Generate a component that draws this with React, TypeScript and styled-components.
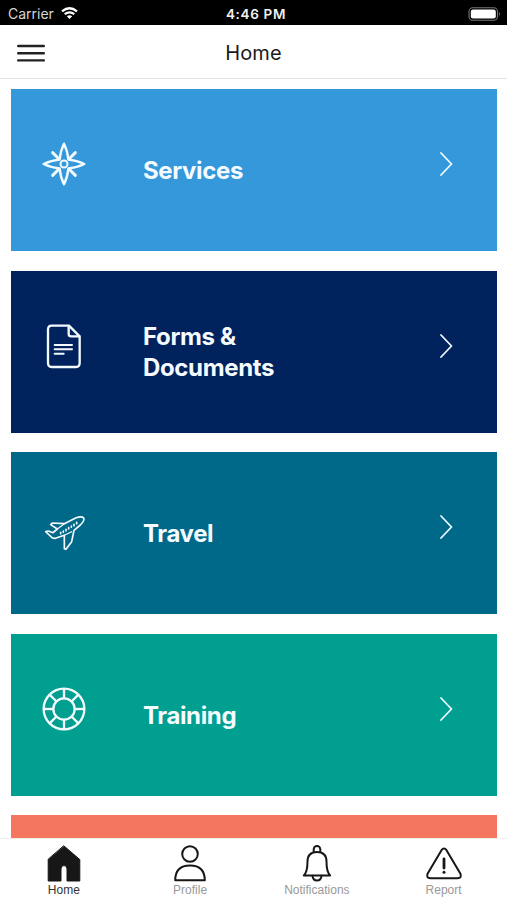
import React from 'react';
import styled, { createGlobalStyle } from 'styled-components';

const GlobalStyle = createGlobalStyle`
  * { box-sizing: border-box; }
  body { margin: 0; background: #fff; overflow: hidden; }
`;

const Screen = styled.div`
  width: 507px;
  height: 900px;
  display: flex;
  flex-direction: column;
  overflow: hidden;
  background: #fff;
  font-family: Inter, sans-serif;
`;

const StatusBar = styled.div`
  flex: none;
  height: 25px;
  display: grid;
  grid-template-columns: 1fr auto 1fr;
  align-items: center;
  padding: 2px 6px 0 8px;
  background: #000;
  color: #fff;
`;

const Carrier = styled.div`
  display: flex;
  align-items: center;
  gap: 7px;
  font-size: 14px;
  line-height: 16px;
  color: #d6d6d6;
`;

const Clock = styled.div`
  padding-left: 3px;
  font-size: 13.5px;
  line-height: 16px;
  font-weight: 600;
  letter-spacing: 0.65px;
  color: #f0f0f0;
`;

const Battery = styled.svg`
  justify-self: end;
  display: block;
`;

const Header = styled.header`
  flex: none;
  height: 54px;
  display: grid;
  grid-template-columns: 1fr auto 1fr;
  align-items: center;
  padding: 2px 17px 0;
  border-bottom: 1px solid #e4e4e4;
`;

const MenuButton = styled.button`
  width: 28px;
  height: 20px;
  padding: 0;
  border: 0;
  background: none;
  svg { display: block; }
`;

const Title = styled.h1`
  margin: 0;
  font-size: 20px;
  font-weight: 400;
  line-height: 24px;
  letter-spacing: 0.15px;
  color: #1a1a1a;
`;

const CardList = styled.main`
  flex: 1;
  min-height: 0;
  overflow: hidden;
  display: flex;
  flex-direction: column;
  gap: 19.6px;
  padding: 10px 10px 0 11px;
`;

const Card = styled.section<{ $color: string }>`
  flex: none;
  height: 162px;
  display: grid;
  grid-template-columns: 101px 1fr 76px;
  align-items: center;
  padding-left: 31px;
  background: ${p => p.$color};
`;

const CardIcon = styled.svg<{ $lift?: number }>`
  display: block;
  width: 44px;
  height: 44px;
  overflow: visible;
  margin-bottom: ${p => p.$lift ?? 12}px;
  fill: none;
  stroke: #f3fbff;
  stroke-width: 7;
  stroke-linejoin: round;
  stroke-linecap: round;
`;

const CardLabel = styled.h2`
  margin: 0;
  padding-top: 2px;
  width: 160px;
  font-size: 24px;
  line-height: 30.5px;
  font-weight: 700;
  letter-spacing: -0.36px;
  color: #f5fbff;
`;

const Chevron = styled.svg`
  display: block;
  margin: 0 0 12px 16.5px;
  fill: none;
  stroke: #effaff;
  stroke-width: 1.8;
  stroke-linecap: round;
  stroke-linejoin: round;
`;

const TabBar = styled.nav`
  flex: none;
  height: 62px;
  display: grid;
  grid-template-columns: repeat(4, 1fr);
  border-top: 1px solid #efefef;
  background: #fff;
`;

const Tab = styled.a<{ $active?: boolean }>`
  display: flex;
  flex-direction: column;
  align-items: center;
  padding-left: ${p => (p.$active ? 1 : 0)}px;
  font-family: "Liberation Sans", Arial, sans-serif;
  font-size: 12px;
  line-height: 14px;
  color: ${p => (p.$active ? '#333' : '#999')};
`;

const TabIcon = styled.svg`
  display: block;
  flex: none;
  width: 40px;
  height: 40px;
  margin-top: 4px;
  fill: none;
  stroke: #171717;
  stroke-width: 2;
  stroke-linejoin: round;
  stroke-linecap: round;
`;

const TabLabel = styled.span`
  display: block;
`;

const Compass = () => (
  <CardIcon viewBox="36 36 132 132">
    <path d="M102 41Q113 63 115 89Q141 91 163 102Q141 113 115 115Q113 141 102 163Q91 141 89 115Q63 113 41 102Q63 91 89 89Q91 63 102 41Z" />
    <circle cx="102" cy="102" r="10.5" strokeWidth="6" />
    <path d="M68 68L87 87M136 68L117 87M68 136L87 117M136 136L117 117" strokeWidth="9" />
  </CardIcon>
);

const Document = () => (
  <CardIcon viewBox="36 41 132 132" $lift={11}>
    <path d="M65 46H117L149 78V158Q149 170 138 170H65Q54 170 54 158V58Q54 46 65 46Z" />
    <path d="M116 47V70Q116 78 124 78H148" />
    <path d="M74 104H126M74 117H126M74 130H101" strokeWidth="6" />
  </CardIcon>
);

const Plane = () => (
  <CardIcon viewBox="36 33 132 132" $lift={0}>
    <g strokeWidth="5">
      <path d="M47 95L55 93L69 98L82 87L62 74L67 69L103 71L137 54Q155 47 161 54Q165 61 151 75L132 91L125 125L108 148L103 146L103 106L76 115Q67 116 64 111Z" />
      <path d="M82 87L103 71M103 106L125 95" strokeWidth="3.5" />
      <path d="M92 101V97M100 97V93M108 92V88M116 87V83M124 82V78M132 77V73M140 71V67" />
    </g>
  </CardIcon>
);

const Wheel = () => (
  <CardIcon viewBox="36 38 132 132">
    <circle cx="102" cy="104" r="61" />
    <circle cx="102" cy="104" r="32" />
    <g strokeLinecap="butt">
      {[0, 45, 90, 135, 180, 225, 270, 315].map(angle => (
        <path key={angle} d="M102 43V72" transform={`rotate(${angle} 102 104)`} />
      ))}
    </g>
  </CardIcon>
);

const cards = [
  { label: 'Services', color: '#3498db', Icon: Compass },
  { label: 'Forms & Documents', color: '#00235d', Icon: Document },
  { label: 'Travel', color: '#00698a', Icon: Plane },
  { label: 'Training', color: '#009f90', Icon: Wheel },
];

export default function App() {
  return (
    <>
      <GlobalStyle />
      <Screen>
        <StatusBar>
          <Carrier>
            Carrier
            <svg width="17" height="13" viewBox="0 0 17 13" fill="none" stroke="#fff" strokeWidth="2.2">
              <path d="M1 4.3Q8.5-1.8 16 4.3M3.7 7.2Q8.5 3.4 13.3 7.2" />
              <path d="M5.8 9.2Q8.5 7.2 11.2 9.2L8.5 12Z" fill="#fff" stroke="none" />
            </svg>
          </Carrier>
          <Clock>4:46 PM</Clock>
          <Battery width="33" height="14" viewBox="0 0 33 14">
            <rect x="1" y=".8" width="28.5" height="12.4" rx="3.8" fill="none" stroke="#777" strokeWidth="1.1" />
            <rect x="2.8" y="2.5" width="25" height="9" rx="2.2" fill="#fff" />
            <path d="M31 5Q33 7 31 9Z" fill="#777" />
          </Battery>
        </StatusBar>
        <Header>
          <MenuButton aria-label="Menu">
            <svg width="28" height="20" viewBox="0 0 28 20" stroke="#222" strokeWidth="2.4" strokeLinecap="round">
              <path d="M1.2 3H26.8M1.2 10.2H26.8M1.2 17.4H26.8" />
            </svg>
          </MenuButton>
          <Title>Home</Title>
        </Header>
        <CardList>
          {cards.map(({ label, color, Icon }) => (
            <Card key={label} $color={color}>
              <Icon />
              <CardLabel>{label}</CardLabel>
              <Chevron width="16" height="26" viewBox="0 0 16 26">
                <path d="M3 2L13.5 13L3 24" />
              </Chevron>
            </Card>
          ))}
          <Card $color="#f5765f" />
        </CardList>
        <TabBar>
          <Tab $active>
            <TabIcon viewBox="0 0 40 40">
              <path d="M20 3L35.8 16.5V38H23V26Q23 22.5 20 22.5Q17 22.5 17 26V38H4.2V16.5Z" fill="#171717" strokeWidth="1" />
            </TabIcon>
            <TabLabel>Home</TabLabel>
          </Tab>
          <Tab>
            <TabIcon viewBox="0 0 40 40">
              <circle cx="20" cy="11" r="7.8" />
              <path d="M5.2 37.3Q5.2 22.4 20 22.4Q34.8 22.4 34.8 37.3Z" />
            </TabIcon>
            <TabLabel>Profile</TabLabel>
          </Tab>
          <Tab>
            <TabIcon viewBox="0 0 40 40">
              <path d="M6.8 32.4Q10.5 29 10.5 18.5C10.5 12 14.2 9 20 9S29.5 12 29.5 18.5Q29.5 29 33.2 32.4Z" />
              <path d="M16.7 9V6.3A3.3 3.3 0 0 1 23.3 6.3V9M15.5 32.8Q16 37.5 20 37.5T24.5 32.8" />
            </TabIcon>
            <TabLabel>Notifications</TabLabel>
          </Tab>
          <Tab>
            <TabIcon viewBox="0 0 40 40">
              <path d="M17.5 7.2Q20 3.8 22.5 7.2L36.3 30.5Q38.3 35 33.5 35.3H6.5Q1.7 35 3.7 30.5Z" />
              <path d="M20 16V25" strokeWidth="2.8" />
              <circle cx="20" cy="29.3" r="1.5" fill="#171717" stroke="none" />
            </TabIcon>
            <TabLabel>Report</TabLabel>
          </Tab>
        </TabBar>
      </Screen>
    </>
  );
}
